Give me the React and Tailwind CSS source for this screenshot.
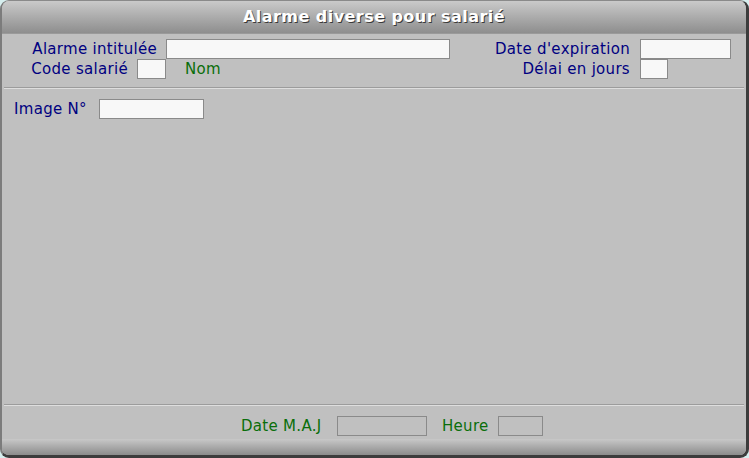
import React from "react";

const font = { fontFamily: '"DejaVu Sans", Verdana, sans-serif' };

function Input({ w, muted }) {
  return (
    <div
      className={`h-[20px] border border-[#8a8a8a] ${muted ? "bg-[#c0c0c0]" : "bg-[#f8f8f8]"}`}
      style={{ width: w }}
    />
  );
}

export default function App() {
  return (
    <div
      className="w-[749px] h-[458px] bg-[#d6eeee] text-[15px] tracking-[0.3px] leading-none"
      style={font}
    >
      <div className="w-full h-full flex flex-col rounded-[9px] overflow-hidden border-t border-l-2 border-r-[3px] border-b-[3px] border-t-[#8a8a8a] border-l-[#7c7c7c] border-r-[#3c3c3c] border-b-[#3c3c3c] bg-[#c0c0c0]">
        {/* Title bar */}
        <div className="h-[33px] shrink-0 flex items-center justify-center bg-gradient-to-b from-[#cacaca] to-[#8e8e8e] border-b border-[#9a9a9a]">
          <span className="text-white font-bold text-[16px] tracking-[0.45px] [text-shadow:1px_1px_0_#3a3a3a]">
            Alarme diverse pour salarié
          </span>
        </div>

        {/* Header fields */}
        <div className="pt-[5px] pb-[8px] shrink-0">
          <div className="flex items-center h-[20px]">
            <div className="w-[155px] text-right whitespace-nowrap text-[#000080]">Alarme intitulée</div>
            <div className="ml-[9px]">
              <Input w={284} />
            </div>
            <div className="flex-1 text-right whitespace-nowrap text-[#000080]">Date d'expiration</div>
            <div className="ml-[10px] w-[91px]">
              <Input w={91} />
            </div>
            <div className="w-[15px]" />
          </div>
          <div className="flex items-center h-[20px]">
            <div className="w-[126px] text-right whitespace-nowrap text-[#000080]">Code salarié</div>
            <div className="ml-[9px]">
              <Input w={29} />
            </div>
            <div className="ml-[19px] text-[#0a6e0a]">Nom</div>
            <div className="flex-1 text-right whitespace-nowrap text-[#000080]">Délai en jours</div>
            <div className="ml-[10px] w-[91px]">
              <Input w={28} />
            </div>
            <div className="w-[15px]" />
          </div>
        </div>

        {/* Separator */}
        <div className="mx-[2px] shrink-0 border-t border-[#9c9c9c] border-b border-b-[#dedede]" />

        {/* Main area */}
        <div className="flex-1 pt-[10px] pl-[12px]">
          <div className="flex items-center h-[20px]">
            <div className="w-[77px] whitespace-nowrap text-[#000080]">Image N°</div>
            <div className="ml-[8px]">
              <Input w={105} />
            </div>
          </div>
        </div>

        {/* Separator */}
        <div className="mx-[2px] shrink-0 border-t border-[#9c9c9c] border-b border-b-[#dedede]" />

        {/* Footer */}
        <div className="h-[33px] shrink-0 flex items-start pt-[10px] pl-[239px]">
          <div className="h-[20px] flex items-center">
            <div className="w-[87px] whitespace-nowrap text-[#0a6e0a]">Date M.A.J</div>
            <div className="ml-[9px]">
              <Input w={90} muted />
            </div>
            <div className="ml-[15px] w-[47px] whitespace-nowrap text-[#0a6e0a]">Heure</div>
            <div className="ml-[9px]">
              <Input w={45} muted />
            </div>
          </div>
        </div>

        {/* Bottom bar */}
        <div className="h-[16px] shrink-0 bg-gradient-to-b from-[#c8c8c8] to-[#8c8c8c]" />
      </div>
    </div>
  );
}
